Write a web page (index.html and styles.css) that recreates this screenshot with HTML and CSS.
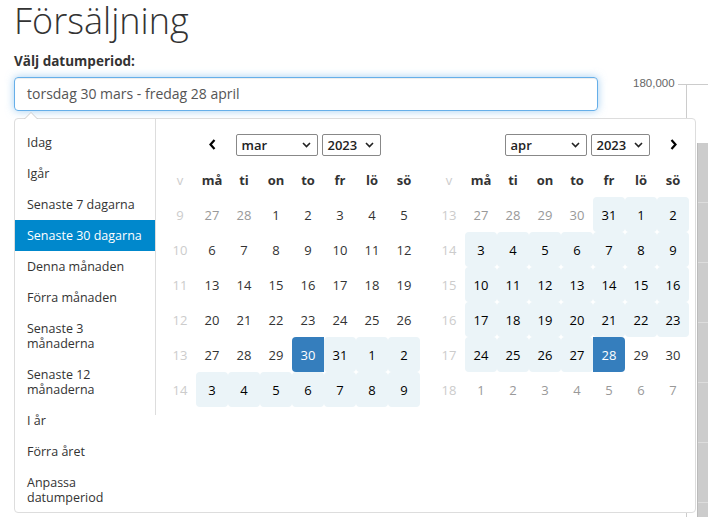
FILE: index.html
```html
<!DOCTYPE html>
<html lang="sv">
<head>
    <meta charset="UTF-8">
    <title>Försäljning</title>
    <link rel="stylesheet" href="styles.css">
</head>
<body>
<div class="page">
    <h1 class="title">Försäljning</h1>
    <label class="filter-label">Välj datumperiod:</label>
    <div class="field">torsdag 30 mars - fredag 28 april</div>

    <!-- chart behind the picker -->
    <div class="chart">
        <span class="axis-label">180,000</span>
        <div class="axis-tick"></div>
        <div class="axis-line"></div>
        <div class="bar"></div>
    </div>

    <div class="picker">
        <ul class="ranges">
            <li>Idag</li>
            <li>Igår</li>
            <li>Senaste 7 dagarna</li>
            <li class="active">Senaste 30 dagarna</li>
            <li>Denna månaden</li>
            <li>Förra månaden</li>
            <li>Senaste 3<br>månaderna</li>
            <li>Senaste 12<br>månaderna</li>
            <li>I år</li>
            <li>Förra året</li>
            <li>Anpassa<br>datumperiod</li>
        </ul>

        <div class="cal cal-left">
            <table>
                <tr class="head">
                    <th></th>
                    <th><svg class="arrow" width="7" height="11" viewBox="0 0 7 11"><path d="M5.5 1 1.5 5.5 5.5 10"/></svg></th>
                    <th colspan="5">
                        <div class="selects">
                            <span class="sel sel-month">mar<svg width="9" height="6" viewBox="0 0 9 6"><path d="M1 1l3.5 3.5L8 1"/></svg></span>
                            <span class="sel sel-year">2023<svg width="9" height="6" viewBox="0 0 9 6"><path d="M1 1l3.5 3.5L8 1"/></svg></span>
                        </div>
                    </th>
                    <th></th>
                </tr>
                <tr>
                    <th class="wk">v</th><th>må</th><th>ti</th><th>on</th><th>to</th><th>fr</th><th>lö</th><th>sö</th>
                </tr>
                <tr>
                    <td class="wk">9</td><td class="off">27</td><td class="off">28</td><td>1</td><td>2</td><td>3</td><td>4</td><td>5</td>
                </tr>
                <tr>
                    <td class="wk">10</td><td>6</td><td>7</td><td>8</td><td>9</td><td>10</td><td>11</td><td>12</td>
                </tr>
                <tr>
                    <td class="wk">11</td><td>13</td><td>14</td><td>15</td><td>16</td><td>17</td><td>18</td><td>19</td>
                </tr>
                <tr>
                    <td class="wk">12</td><td>20</td><td>21</td><td>22</td><td>23</td><td>24</td><td>25</td><td>26</td>
                </tr>
                <tr>
                    <td class="wk">13</td><td>27</td><td>28</td><td>29</td><td class="start">30</td><td class="in">31</td><td class="in">1</td><td class="in">2</td>
                </tr>
                <tr>
                    <td class="wk">14</td><td class="in">3</td><td class="in">4</td><td class="in">5</td><td class="in">6</td><td class="in">7</td><td class="in">8</td><td class="in">9</td>
                </tr>
            </table>
        </div>

        <div class="cal cal-right">
            <table>
                <tr class="head">
                    <th></th>
                    <th></th>
                    <th colspan="5">
                        <div class="selects">
                            <span class="sel sel-month">apr<svg width="9" height="6" viewBox="0 0 9 6"><path d="M1 1l3.5 3.5L8 1"/></svg></span>
                            <span class="sel sel-year">2023<svg width="9" height="6" viewBox="0 0 9 6"><path d="M1 1l3.5 3.5L8 1"/></svg></span>
                        </div>
                    </th>
                    <th><svg class="arrow" width="7" height="11" viewBox="0 0 7 11"><path d="M1.5 1 5.5 5.5 1.5 10"/></svg></th>
                </tr>
                <tr>
                    <th class="wk">v</th><th>må</th><th>ti</th><th>on</th><th>to</th><th>fr</th><th>lö</th><th>sö</th>
                </tr>
                <tr>
                    <td class="wk">13</td><td class="off">27</td><td class="off">28</td><td class="off">29</td><td class="off">30</td><td class="in">31</td><td class="in">1</td><td class="in">2</td>
                </tr>
                <tr>
                    <td class="wk">14</td><td class="in">3</td><td class="in">4</td><td class="in">5</td><td class="in">6</td><td class="in">7</td><td class="in">8</td><td class="in">9</td>
                </tr>
                <tr>
                    <td class="wk">15</td><td class="in">10</td><td class="in">11</td><td class="in">12</td><td class="in">13</td><td class="in">14</td><td class="in">15</td><td class="in">16</td>
                </tr>
                <tr>
                    <td class="wk">16</td><td class="in">17</td><td class="in">18</td><td class="in">19</td><td class="in">20</td><td class="in">21</td><td class="in">22</td><td class="in">23</td>
                </tr>
                <tr>
                    <td class="wk">17</td><td class="in">24</td><td class="in">25</td><td class="in">26</td><td class="in">27</td><td class="end">28</td><td>29</td><td>30</td>
                </tr>
                <tr>
                    <td class="wk">18</td><td class="off">1</td><td class="off">2</td><td class="off">3</td><td class="off">4</td><td class="off">5</td><td class="off">6</td><td class="off">7</td>
                </tr>
            </table>
        </div>
    </div>
</div>
</body>
</html>
```

FILE: styles.css
```css
*{box-sizing:border-box}
body{
    margin:0;
    background-color:#fff;
    font-family:"Open Sans", "DejaVu Sans", sans-serif;
    color:#333;
}
.page{
    position:relative;
    height:517px;
    overflow:hidden;
    padding:0 14px;
}
.title{
    margin:0;
    padding-top:1px;
    font-size:36px;
    font-weight:300;
    line-height:40px;
}
.filter-label{
    display:inline-block;
    margin:10px 0 6px;
    font-size:13.5px;
    font-weight:700;
    line-height:20px;
}
.field{
    width:584px;
    height:34px;
    padding:6px 12px;
    border:1px solid #66afe9;
    border-radius:4px;
    box-shadow:inset 0 1px 1px rgba(0,0,0,.075), 0 0 8px rgba(102,175,233,.6);
    font-size:14px;
    line-height:20px;
    color:#555;
}

/* chart in the background */
.chart{
    position:absolute;
    top:0;
    left:620px;
    right:0;
    bottom:0;
}
.axis-label{
    position:absolute;
    left:13px;
    top:77px;
    font-family:"Liberation Sans", Arial, sans-serif;
    font-size:11.5px;
    color:#666;
}
.axis-tick{
    position:absolute;
    left:58px;
    right:0;
    top:84px;
    border-top:1px solid #ccc;
}
.axis-line{
    position:absolute;
    left:66px;
    top:84px;
    bottom:0;
    border-left:1px solid #ccc;
}
.bar{
    position:absolute;
    left:77px;
    right:0;
    top:143px;
    bottom:0;
    border-left:1px solid #bbb;
    background:repeating-linear-gradient(to bottom, #ccc 0, #ccc 59px, #ddd 59px, #ddd 60px);
}

/* date range picker */
.picker{
    position:absolute;
    z-index:2;
    left:14px;
    top:118px;
    width:682px;
    height:395px;
    display:flex;
    align-items:flex-start;
    background-color:#fff;
    border:1px solid #ddd;
    border-radius:4px;
}
.picker:before, .picker:after{
    content:"";
    position:absolute;
    border-left:7px solid transparent;
    border-right:7px solid transparent;
}
.picker:before{
    left:9px;
    top:-7px;
    border-bottom:7px solid #ccc;
}
.picker:after{
    left:10px;
    top:-6px;
    border-left-width:6px;
    border-right-width:6px;
    border-bottom:6px solid #fff;
}
.ranges{
    width:140px;
    flex-shrink:0;
    margin:8px 0 0;
    padding:0;
    list-style:none;
    font-size:12.5px;
    line-height:15px;
}
.ranges li{
    padding:8px 12px;
    white-space:nowrap;
}
.ranges li.active{
    background-color:#08c;
    color:#fff;
}
.cal{
    padding:8px 7px 8px 8px;
}
.cal-left{
    border-left:1px solid #ddd;
}
.cal-right{
    padding:8px 6px;
}
table{
    border-collapse:separate;
    border-spacing:0;
}
th, td{
    width:32px;
    height:35px;
    padding:0;
    text-align:center;
    font-size:13px;
    white-space:nowrap;
}
th{
    font-weight:700;
}
.wk{
    color:#ccc;
    font-weight:400;
}
td.off{
    color:#999;
}
td.in{
    background-color:#ebf4f8;
    color:#000;
    border-radius:4px;
}
td.start, td.end{
    background-color:#357ebd;
    color:#fff;
}
td.start{border-radius:4px 0 0 4px}
td.end{border-radius:0 4px 4px 0}
.arrow{
    display:block;
    margin:0 auto;
    fill:none;
    stroke:#000;
    stroke-width:2.2;
}
.selects{
    display:flex;
    justify-content:center;
    gap:4px;
}
.sel{
    display:flex;
    align-items:center;
    justify-content:space-between;
    height:22px;
    padding:0 6px 0 5px;
    border:1px solid #888;
    border-radius:2px;
    font-size:13px;
    font-weight:600;
    color:#222;
}
.sel svg{
    fill:none;
    stroke:#222;
    stroke-width:1.6;
}
.sel-month{width:82px}
.sel-year{width:59px}
```
